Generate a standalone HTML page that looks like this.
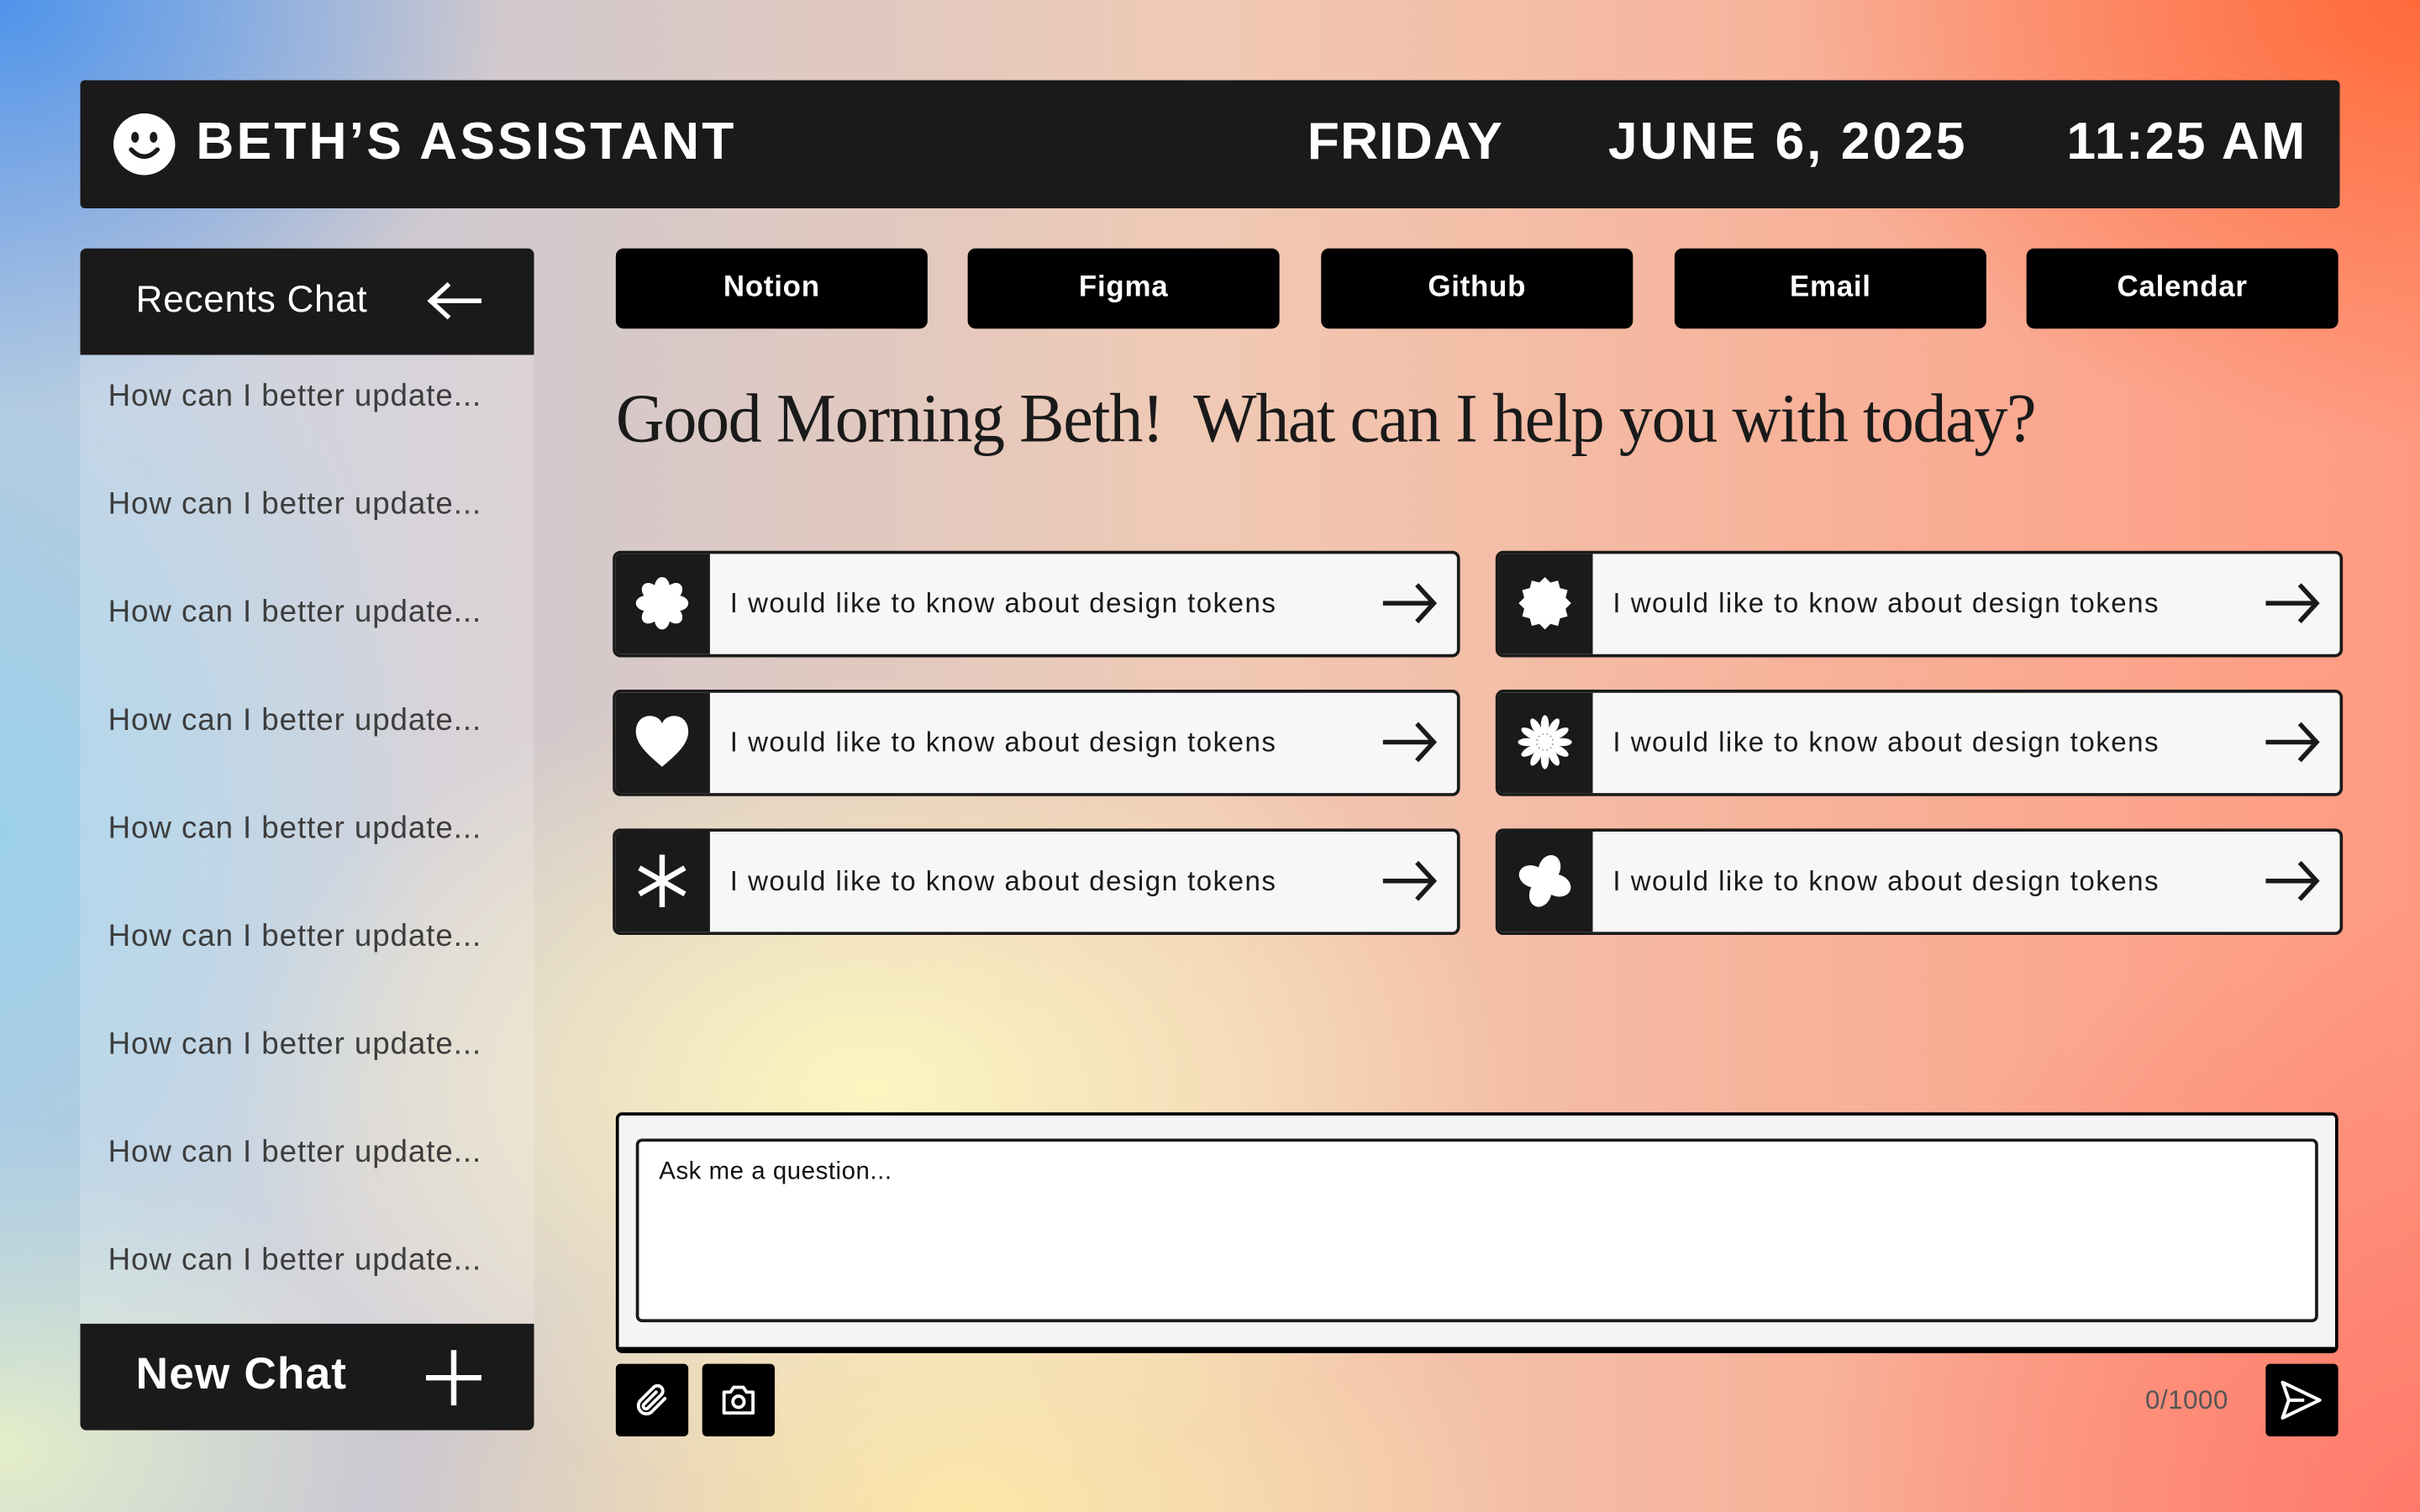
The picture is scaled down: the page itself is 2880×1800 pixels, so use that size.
<!DOCTYPE html>
<html><head><meta charset="utf-8"><style>
html,body{margin:0;padding:0;width:2880px;height:1800px;overflow:hidden}
body{background:
radial-gradient(ellipse 800px 650px at 0% 0%,#4f93ea 0%,rgba(95,155,235,0) 75%),
radial-gradient(ellipse 1000px 700px at 100% 0%,#ff6a3a 0%,rgba(255,110,70,0) 75%),
radial-gradient(ellipse 1100px 700px at 36% 72%,#fdf6c0 0%,rgba(253,246,192,0) 70%),
radial-gradient(ellipse 900px 500px at 40% 100%,#fde8a8 0%,rgba(253,232,168,0) 75%),
radial-gradient(ellipse 900px 900px at 100% 100%,#ff7a6a 0%,rgba(255,122,106,0) 80%),
radial-gradient(ellipse 700px 1000px at 0% 55%,#9cd0ea 0%,rgba(156,208,234,0) 75%),
radial-gradient(ellipse 600px 500px at 0% 95%,#e6eec8 0%,rgba(230,238,200,0) 75%),
linear-gradient(90deg,#bcc9df 0%,#f0c9b4 50%,#ff9a80 100%);}
#w{position:absolute;left:0;top:0;width:1568px;height:980px;transform:scale(1.836735);transform-origin:0 0;font-family:"Liberation Sans",sans-serif}
.a{position:absolute}
.hdr{left:52px;top:52px;width:1464px;height:83px;background:#1a1a1a;border-radius:3px;color:#fff;font-weight:bold;font-size:34px}
.hdr span{position:absolute;top:21px;letter-spacing:0.6px}
.tab{top:161px;width:202px;height:52px;background:#000;border-radius:5px;color:#fff;font-weight:bold;font-size:19px;text-align:center;line-height:52px;letter-spacing:0.4px}
.side{left:52px;top:230px;width:294px;height:628px;background:rgba(255,255,255,0.2)}
.it{left:70px;color:#3d3d3d;font-size:20px;letter-spacing:0.5px}
.card{width:545px;height:65px;border:2px solid #1a1a1a;border-radius:5px;background:#f7f7f7;overflow:hidden}
.card .ic{position:absolute;left:0;top:0;width:61px;height:65px;background:#1a1a1a}
.card .ic svg{position:absolute;left:12px;top:14px}
.card .t{position:absolute;left:74px;top:22px;font-size:18px;color:#1a1a1a;letter-spacing:0.8px}
.card .ar{position:absolute;right:12px;top:17px}
.btn{top:884px;width:47px;height:47px;background:#000;border-radius:3px}
</style></head><body><div id="w">
<div class="a hdr">
 <svg class="a" style="left:21px;top:21px" width="41" height="41" viewBox="0 0 41 41"><circle cx="20.5" cy="20.5" r="20" fill="#fff"/><ellipse cx="14.5" cy="16" rx="2.5" ry="3.5" fill="#1a1a1a"/><ellipse cx="26.5" cy="16" rx="2.5" ry="3.5" fill="#1a1a1a"/><path d="M12 24 Q20.5 33 29 24" stroke="#1a1a1a" stroke-width="3" fill="none" stroke-linecap="round"/></svg>
 <span style="left:75px;letter-spacing:1.7px">BETH’S ASSISTANT</span>
 <span style="left:795px">FRIDAY</span>
 <span style="left:990px;letter-spacing:1.6px">JUNE 6, 2025</span>
 <span style="left:1287px;letter-spacing:1.2px">11:25 AM</span>
</div>
<div class="a" style="left:52px;top:161px;width:294px;height:69px;background:#1a1a1a;border-radius:4px 4px 0 0;color:#fff;font-size:24px">
 <span class="a" style="left:36px;top:20px;letter-spacing:0.4px">Recents Chat</span>
 <svg class="a" style="left:224px;top:20px" width="38" height="28" viewBox="0 0 38 28"><path d="M36 14H4M15 3L3 14l12 11" stroke="#fff" stroke-width="3" fill="none"/></svg>
</div>
<div class="a side"></div>
<div class="a it" style="top:246px">How can I better update...</div>
<div class="a it" style="top:316px">How can I better update...</div>
<div class="a it" style="top:386px">How can I better update...</div>
<div class="a it" style="top:456px">How can I better update...</div>
<div class="a it" style="top:526px">How can I better update...</div>
<div class="a it" style="top:596px">How can I better update...</div>
<div class="a it" style="top:666px">How can I better update...</div>
<div class="a it" style="top:736px">How can I better update...</div>
<div class="a it" style="top:806px">How can I better update...</div>
<div class="a" style="left:52px;top:858px;width:294px;height:69px;background:#1a1a1a;border-radius:0 0 4px 4px;color:#fff;font-size:29px;font-weight:bold">
 <span class="a" style="left:36px;top:17px;letter-spacing:0.6px">New Chat</span>
 <svg class="a" style="left:224px;top:17px" width="36" height="36" viewBox="0 0 36 36"><path d="M18 0V36M0 18H36" stroke="#fff" stroke-width="3.5"/></svg>
</div>
<div class="a tab" style="left:399px">Notion</div>
<div class="a tab" style="left:627px">Figma</div>
<div class="a tab" style="left:856px">Github</div>
<div class="a tab" style="left:1085px">Email</div>
<div class="a tab" style="left:1313px">Calendar</div>
<div class="a" style="left:399px;top:245px;font-family:'Liberation Serif',serif;font-size:45px;color:#1a1a1a;white-space:nowrap;transform:scaleX(0.97);transform-origin:0 0;letter-spacing:-0.8px">Good Morning Beth!&nbsp; What can I help you with today?</div>

<div class="a card" style="left:397px;top:357px"><div class="ic"><svg width="36" height="36" viewBox="-18 -18 36 36"><g fill="#fff"><circle r="7"/><g id="p8"><ellipse cy="-10" rx="5" ry="7"/><ellipse cy="10" rx="5" ry="7"/><ellipse cx="-10" rx="7" ry="5"/><ellipse cx="10" rx="7" ry="5"/></g><use href="#p8" transform="rotate(45)"/></g></svg></div><div class="t">I would like to know about design tokens</div><svg class="ar" width="36" height="30" viewBox="0 0 36 30"><path d="M0 15H33M22 3l11 12-11 12" stroke="#1a1a1a" stroke-width="3" fill="none"/></svg></div>
<div class="a card" style="left:969px;top:357px"><div class="ic"><svg width="36" height="36" viewBox="-18 -18 36 36"><polygon fill="#fff" points="0,-17 3.6,-13.4 8.5,-14.7 9.8,-9.8 14.7,-8.5 13.4,-3.6 17,0 13.4,3.6 14.7,8.5 9.8,9.8 8.5,14.7 3.6,13.4 0,17 -3.6,13.4 -8.5,14.7 -9.8,9.8 -14.7,8.5 -13.4,3.6 -17,0 -13.4,-3.6 -14.7,-8.5 -9.8,-9.8 -8.5,-14.7 -3.6,-13.4"/></svg></div><div class="t">I would like to know about design tokens</div><svg class="ar" width="36" height="30" viewBox="0 0 36 30"><path d="M0 15H33M22 3l11 12-11 12" stroke="#1a1a1a" stroke-width="3" fill="none"/></svg></div>
<div class="a card" style="left:397px;top:447px"><div class="ic"><svg width="36" height="36" viewBox="0 0 36 36"><path fill="#fff" d="M18 34C10 27 1 20 1 11 1 5 5 1 10 1c4 0 7 2 8 5 1-3 4-5 8-5 5 0 9 4 9 10 0 9-9 16-17 23z"/></svg></div><div class="t">I would like to know about design tokens</div><svg class="ar" width="36" height="30" viewBox="0 0 36 30"><path d="M0 15H33M22 3l11 12-11 12" stroke="#1a1a1a" stroke-width="3" fill="none"/></svg></div>
<div class="a card" style="left:969px;top:447px"><div class="ic"><svg width="36" height="36" viewBox="-18 -18 36 36"><g fill="#fff"><circle r="5"/><ellipse cy="-11" rx="2.6" ry="6.5"/><ellipse cy="-11" rx="2.6" ry="6.5" transform="rotate(30)"/><ellipse cy="-11" rx="2.6" ry="6.5" transform="rotate(60)"/><ellipse cy="-11" rx="2.6" ry="6.5" transform="rotate(90)"/><ellipse cy="-11" rx="2.6" ry="6.5" transform="rotate(120)"/><ellipse cy="-11" rx="2.6" ry="6.5" transform="rotate(150)"/><ellipse cy="-11" rx="2.6" ry="6.5" transform="rotate(180)"/><ellipse cy="-11" rx="2.6" ry="6.5" transform="rotate(210)"/><ellipse cy="-11" rx="2.6" ry="6.5" transform="rotate(240)"/><ellipse cy="-11" rx="2.6" ry="6.5" transform="rotate(270)"/><ellipse cy="-11" rx="2.6" ry="6.5" transform="rotate(300)"/><ellipse cy="-11" rx="2.6" ry="6.5" transform="rotate(330)"/></g></svg></div><div class="t">I would like to know about design tokens</div><svg class="ar" width="36" height="30" viewBox="0 0 36 30"><path d="M0 15H33M22 3l11 12-11 12" stroke="#1a1a1a" stroke-width="3" fill="none"/></svg></div>
<div class="a card" style="left:397px;top:537px"><div class="ic"><svg width="36" height="36" viewBox="-18 -18 36 36"><g stroke="#fff" stroke-width="3.5"><path d="M0-17V17"/><path d="M0-17V17" transform="rotate(60)"/><path d="M0-17V17" transform="rotate(120)"/></g></svg></div><div class="t">I would like to know about design tokens</div><svg class="ar" width="36" height="30" viewBox="0 0 36 30"><path d="M0 15H33M22 3l11 12-11 12" stroke="#1a1a1a" stroke-width="3" fill="none"/></svg></div>
<div class="a card" style="left:969px;top:537px"><div class="ic"><svg width="36" height="36" viewBox="-18 -18 36 36"><g fill="#fff" transform="rotate(20)"><ellipse cy="-8.5" rx="7" ry="9"/><ellipse cy="8.5" rx="7" ry="9"/><ellipse cx="-8.5" rx="9" ry="7"/><ellipse cx="8.5" rx="9" ry="7"/></g></svg></div><div class="t">I would like to know about design tokens</div><svg class="ar" width="36" height="30" viewBox="0 0 36 30"><path d="M0 15H33M22 3l11 12-11 12" stroke="#1a1a1a" stroke-width="3" fill="none"/></svg></div>

<div class="a" style="left:399px;top:721px;width:1112px;height:150px;background:#f5f5f5;border:2px solid #000;border-radius:4px;border-bottom-width:4px"></div>
<div class="a" style="left:412px;top:738px;width:1086px;height:115px;background:#fff;border:2px solid #1a1a1a;border-radius:4px"></div>
<div class="a" style="left:427px;top:751px;font-size:16px;color:#111;letter-spacing:0.3px">Ask me a question...</div>
<div class="a btn" style="left:399px"><svg class="a" style="left:11px;top:11px" width="25" height="25" viewBox="0 0 24 24"><path d="M20 11l-8.5 8.5a5 5 0 0 1-7-7L13 4a3.3 3.3 0 0 1 4.7 4.7L9.3 17a1.7 1.7 0 0 1-2.4-2.4L14.5 7" stroke="#fff" stroke-width="2" fill="none" stroke-linecap="round"/></svg></div>
<div class="a btn" style="left:455px"><svg class="a" style="left:11px;top:11px" width="25" height="25" viewBox="0 0 24 24"><path d="M3 7h4l2-3h6l2 3h4v13H3z" stroke="#fff" stroke-width="2" fill="none" stroke-linejoin="round"/><circle cx="12" cy="13" r="3.5" stroke="#fff" stroke-width="2" fill="none"/></svg></div>
<div class="a" style="left:1390px;top:898px;font-size:17px;color:#555;letter-spacing:0.3px">0/1000</div>
<div class="a btn" style="left:1468px"><svg class="a" style="left:9px;top:10px" width="28" height="27" viewBox="0 0 28 27"><path d="M2 2L26 13.5 2 25 6 13.5z M6 13.5H16" stroke="#fff" stroke-width="2.2" fill="none" stroke-linejoin="round"/></svg></div>
</div></body></html>
